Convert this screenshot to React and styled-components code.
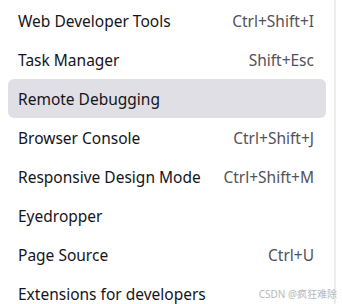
import React from "react";
import styled, { createGlobalStyle } from "styled-components";

const Global = createGlobalStyle`
  html, body { margin: 0; padding: 0; background: #fff; }
  body { font-family: "Noto Sans", "Open Sans", sans-serif; }
`;

const Page = styled.div`
  width: 342px;
  height: 304px;
  display: flex;
  overflow: hidden;
  position: relative;
`;

const Menu = styled.div`
  width: 334px;
  padding: 1px 8px 0 8px;
  box-sizing: border-box;
  display: flex;
  flex-direction: column;
`;

const Edge = styled.div`
  width: 2px;
  background: #ededed;
  height: 100%;
`;

const Item = styled.div`
  height: 39px;
  flex: none;
  display: flex;
  align-items: center;
  justify-content: space-between;
  padding: 0 12px 0 10px;
  border-radius: 6px;
  background: ${(p) => (p.$active ? "#e0dfe5" : "transparent")};
  box-sizing: border-box;
`;

const Label = styled.span`
  font-size: 15.5px;
  color: #15141a;
  white-space: nowrap;
`;

const Shortcut = styled.span`
  font-size: 15.5px;
  color: #52525b;
  white-space: nowrap;
`;

const Watermark = styled.div`
  position: absolute;
  right: 5px;
  bottom: 3px;
  font-family: "Noto Sans", "Noto Sans CJK SC", sans-serif;
  font-size: 10px;
  color: #b8b8b8;
  white-space: nowrap;
`;

const items = [
  ["Web Developer Tools", "Ctrl+Shift+I"],
  ["Task Manager", "Shift+Esc"],
  ["Remote Debugging", "", true],
  ["Browser Console", "Ctrl+Shift+J"],
  ["Responsive Design Mode", "Ctrl+Shift+M"],
  ["Eyedropper", ""],
  ["Page Source", "Ctrl+U"],
  ["Extensions for developers", ""],
];

export default function App() {
  return (
    <Page>
      <Global />
      <Menu>
        {items.map(([l, s, a]) => (
          <Item key={l} $active={a}>
            <Label>{l}</Label>
            {s && <Shortcut>{s}</Shortcut>}
          </Item>
        ))}
      </Menu>
      <Edge />
      <Watermark>CSDN @疯狂难除</Watermark>
    </Page>
  );
}
